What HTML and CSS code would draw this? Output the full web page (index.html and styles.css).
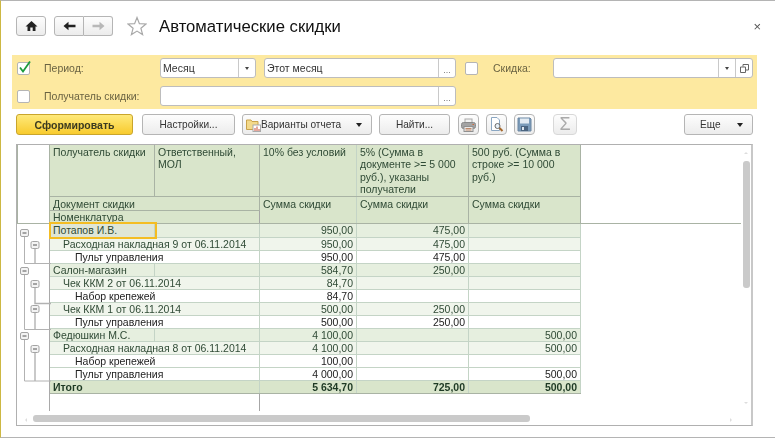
FILE: index.html
```html
<!DOCTYPE html>
<html>
    <head>
        <title>Автоматические скидки</title>
        <link rel="stylesheet" href="styles.css">
    </head>
    <body>
    <div class="window">

    <div class="head">
        <button class="btn nav-home">
            <svg width="13" height="12" viewBox="0 0 13 12"><path d="M6.5 1 L12.5 6.5 H10.5 V11 H7.7 V7.5 H5.3 V11 H2.5 V6.5 H0.5 Z" fill="#222"/></svg>
        </button>
        <div class="nav-group">
            <button class="btn nav-arrow">
                <svg width="13" height="10" viewBox="0 0 13 10"><path d="M0.5 5 L5.5 0.8 V3.7 H12.5 V6.3 H5.5 V9.2 Z" fill="#222"/></svg>
            </button>
            <button class="btn nav-arrow">
                <svg width="13" height="10" viewBox="0 0 13 10"><path d="M12.5 5 L7.5 0.8 V3.7 H0.5 V6.3 H7.5 V9.2 Z" fill="#b8b8b8"/></svg>
            </button>
        </div>
        <svg class="star" width="20" height="20" viewBox="0 0 20 20"><path d="M10 1.5 L12.4 7.6 L19 8 L13.9 12.2 L15.6 18.6 L10 15.1 L4.4 18.6 L6.1 12.2 L1 8 L7.6 7.6 Z" fill="#fff" stroke="#a9a9a9" stroke-width="1.2"/></svg>
        <h1 class="title">Автоматические скидки</h1>
        <div class="close">×</div>
    </div>

    <div class="filters">
        <div class="filter-row">
            <span class="check on"><svg width="15" height="15" viewBox="0 0 15 15"><path d="M3 7.5 L6 11.5 L13 1.5" fill="none" stroke="#1c9b3c" stroke-width="1.8"/></svg></span>
            <label class="lbl lbl-first">Период:</label>
            <div class="field w-period">
                <span class="val">Месяц</span>
                <span class="fbtn"><i class="caret"></i></span>
            </div>
            <div class="field w-month">
                <span class="val">Этот месяц</span>
                <span class="fbtn dots">...</span>
            </div>
            <span class="check check-discount"></span>
            <label class="lbl lbl-discount">Скидка:</label>
            <div class="field w-discount">
                <span class="val"></span>
                <span class="fbtn"><i class="caret"></i></span>
                <span class="fbtn">
                    <svg width="9" height="9" viewBox="0 0 9 9"><path d="M3 2.5 V0.5 H8.5 V6 H6 M0.5 3 H5.5 V8.5 H0.5 Z" fill="none" stroke="#666"/></svg>
                </span>
            </div>
        </div>
        <div class="filter-row">
            <span class="check"></span>
            <label class="lbl lbl-first">Получатель скидки:</label>
            <div class="field w-person">
                <span class="val"></span>
                <span class="fbtn dots">...</span>
            </div>
        </div>
    </div>

    <div class="commands">
        <button class="btn cmd cmd-main">Сформировать</button>
        <button class="btn cmd cmd-settings">Настройки...</button>
        <button class="btn cmd cmd-variants">
            <svg width="15" height="14" viewBox="0 0 15 14"><path d="M0.5 2 H5 L6 3.5 H12 V11.5 H0.5 Z" fill="#f3d98a" stroke="#c9a24a"/><rect x="7" y="7" width="7.5" height="6.5" fill="#fff" stroke="#aaa"/><path d="M9 13 V10 M11 13 V8.5 M13 13 V11" stroke="#c8503c"/></svg>
            <span class="cmd-text">Варианты отчета</span>
            <i class="caret big"></i>
        </button>
        <button class="btn cmd cmd-find">Найти...</button>
        <button class="btn icon-btn">
            <svg width="15" height="14" viewBox="0 0 15 14"><rect x="4" y="1" width="7" height="4" fill="#f2f2f2" stroke="#aaa"/><rect x="0.5" y="4.5" width="14" height="6" rx="2" fill="#a3a3a3" stroke="#8a8a8a"/><rect x="3" y="8.5" width="9" height="5" fill="#e9e9e9" stroke="#8f8f8f"/><path d="M11.5 6.5 H13" stroke="#d0693a"/><path d="M4.5 10.5 H10.5 M4.5 12 H10.5" stroke="#c08a6a"/></svg>
        </button>
        <button class="btn icon-btn">
            <svg width="15" height="15" viewBox="0 0 15 15"><path d="M2.5 0.5 H8 L10.5 3 V13.5 H2.5 Z" fill="#fff" stroke="#8aa6c2"/><circle cx="8.5" cy="9" r="2.5" fill="#e6f0f8" stroke="#6a6a6a"/><path d="M10.5 11 L13.5 14" stroke="#a5672b" stroke-width="2"/></svg>
        </button>
        <button class="btn icon-btn">
            <svg width="15" height="15" viewBox="0 0 15 15"><path d="M1 1 H13 L14 2 V14 H1 Z" fill="#7c9cba" stroke="#6a86a2"/><rect x="3" y="1.5" width="9" height="5" fill="#e3ebf2"/><rect x="4" y="9" width="7" height="5" fill="#4c6580"/><rect x="5" y="10" width="2" height="3" fill="#dfe7ef"/></svg>
        </button>
        <button class="btn icon-btn sigma">Σ</button>
        <button class="btn cmd cmd-more"><span>Еще</span><i class="caret big"></i></button>
    </div>

    <div class="frame">
        <table class="report">
            <colgroup>
                <col class="c-tree">
                <col class="c-name">
                <col class="c-mol">
                <col class="c-a">
                <col class="c-b">
                <col class="c-c">
                <col>
            </colgroup>
            <tr class="h1">
                <th class="blank" rowspan="3"></th>
                <th>Получатель скидки</th>
                <th>Ответственный, МОЛ</th>
                <th class="strong">10% без условий</th>
                <th>5% (Сумма в документе &gt;= 5 000 руб.), указаны получатели</th>
                <th>500 руб. (Сумма в строке &gt;= 10 000 руб.)</th>
                <th class="rest" rowspan="3"></th>
            </tr>
            <tr class="h2">
                <th colspan="2">Документ скидки</th>
                <th class="strong" rowspan="2">Сумма скидки</th>
                <th rowspan="2">Сумма скидки</th>
                <th rowspan="2">Сумма скидки</th>
            </tr>
            <tr class="h3">
                <th colspan="2">Номенклатура</th>
            </tr>
            <tr class="l1 first">
                <td class="tree" rowspan="14">
                    <svg width="33" height="160" viewBox="0 0 33 160">
                        <path class="tree-line" d="M6.5 13 V39.5 H33"/>
                        <path class="tree-line" d="M6.5 51 V105.5 H33"/>
                        <path class="tree-line" d="M6.5 116 V157 H33"/>
                        <path class="tree-line second" d="M17 25 V39"/>
                        <path class="tree-line second" d="M17 64 V79.5 H33"/>
                        <path class="tree-line second" d="M17 89 V105"/>
                        <path class="tree-line second" d="M17 129 V157"/>
                        <g class="tree-box">
                            <rect x="2.5" y="5.5" width="8" height="7" rx="1.5"/><path d="M4.5 9 H8.5"/>
                            <rect x="13" y="17.5" width="8" height="7" rx="1.5"/><path d="M15 21 H19"/>
                            <rect x="2.5" y="43.5" width="8" height="7" rx="1.5"/><path d="M4.5 47 H8.5"/>
                            <rect x="13" y="56.5" width="8" height="7" rx="1.5"/><path d="M15 60 H19"/>
                            <rect x="13" y="81.5" width="8" height="7" rx="1.5"/><path d="M15 85 H19"/>
                            <rect x="2.5" y="108.5" width="8" height="7" rx="1.5"/><path d="M4.5 112 H8.5"/>
                            <rect x="13" y="121.5" width="8" height="7" rx="1.5"/><path d="M15 125 H19"/>
                        </g>
                    </svg>
                </td>
                <td class="current">Потапов И.В.</td><td></td>
                <td class="num strong">950,00</td><td class="num">475,00</td><td></td><td class="rest"></td>
            </tr>
            <tr class="l2">
                <td class="in2" colspan="2">Расходная накладная 9 от 06.11.2014</td>
                <td class="num strong">950,00</td><td class="num">475,00</td><td></td><td class="rest"></td>
            </tr>
            <tr class="l3">
                <td class="in3" colspan="2">Пульт управления</td>
                <td class="num strong">950,00</td><td class="num">475,00</td><td></td><td class="rest"></td>
            </tr>
            <tr class="l1">
                <td>Салон-магазин</td><td></td>
                <td class="num strong">584,70</td><td class="num">250,00</td><td></td><td class="rest"></td>
            </tr>
            <tr class="l2">
                <td class="in2" colspan="2">Чек ККМ 2 от 06.11.2014</td>
                <td class="num strong">84,70</td><td></td><td></td><td class="rest"></td>
            </tr>
            <tr class="l3">
                <td class="in3" colspan="2">Набор крепежей</td>
                <td class="num strong">84,70</td><td></td><td></td><td class="rest"></td>
            </tr>
            <tr class="l2">
                <td class="in2" colspan="2">Чек ККМ 1 от 06.11.2014</td>
                <td class="num strong">500,00</td><td class="num">250,00</td><td></td><td class="rest"></td>
            </tr>
            <tr class="l3">
                <td class="in3" colspan="2">Пульт управления</td>
                <td class="num strong">500,00</td><td class="num">250,00</td><td></td><td class="rest"></td>
            </tr>
            <tr class="l1">
                <td>Федюшкин М.С.</td><td></td>
                <td class="num strong">4 100,00</td><td></td><td class="num">500,00</td><td class="rest"></td>
            </tr>
            <tr class="l2">
                <td class="in2" colspan="2">Расходная накладная 8 от 06.11.2014</td>
                <td class="num strong">4 100,00</td><td></td><td class="num">500,00</td><td class="rest"></td>
            </tr>
            <tr class="l3">
                <td class="in3" colspan="2">Набор крепежей</td>
                <td class="num strong">100,00</td><td></td><td></td><td class="rest"></td>
            </tr>
            <tr class="l3">
                <td class="in3" colspan="2">Пульт управления</td>
                <td class="num strong">4 000,00</td><td></td><td class="num">500,00</td><td class="rest"></td>
            </tr>
            <tr class="total">
                <td colspan="2">Итого</td>
                <td class="num strong">5 634,70</td><td class="num">725,00</td><td class="num">500,00</td><td class="rest"></td>
            </tr>
            <tr class="tail">
                <td class="tail-name" colspan="2"></td>
                <td class="strong"></td><td class="none"></td><td class="none"></td><td class="rest"></td>
            </tr>
        </table>
        <div class="scroll-h"></div>
        <div class="scroll-v"></div>
        <i class="tick tick-left"></i>
        <i class="tick tick-right"></i>
        <i class="tick tick-up"></i>
        <i class="tick tick-down"></i>
    </div>

    </div>
    </body>
</html>
```

FILE: styles.css
```css
*{
    box-sizing: border-box;
}
body{
    margin: 0;
    background: #fff;
    font-family: "Liberation Sans", Arial, sans-serif;
    font-size: 10.5px;
    color: #2f4a35;
}
.window{
    width: 775px;
    height: 438px;
    border-top: 1px solid #b4b4b4;
    border-bottom: 1px solid #b4b4b4;
    border-left: 1px solid #cdb843;
    overflow: hidden;
    filter: blur(0.3px);
}

/* buttons */
.btn{
    font-family: inherit;
    font-size: 10.1px;
    color: #333;
    height: 21px;
    padding: 0;
    border: 1px solid #b5b5b5;
    border-radius: 3px;
    background: linear-gradient(#fdfdfd, #ececec);
    display: flex;
    align-items: center;
    justify-content: center;
}

/* head */
.head{
    display: flex;
    align-items: center;
    height: 20px;
    margin-top: 15px;
    padding-left: 15px;
}
.nav-home{
    width: 30px;
    height: 20px;
}
.nav-group{
    display: flex;
    margin-left: 8px;
}
.nav-arrow{
    width: 30px;
    height: 20px;
    border-radius: 3px 0 0 3px;
}
.nav-arrow + .nav-arrow{
    width: 29px;
    border-left: 0;
    border-radius: 0 3px 3px 0;
}
.star{
    margin-left: 14px;
}
.title{
    margin: 2px 0 0 12px;
    font-size: 16.7px;
    font-weight: normal;
    color: #111;
}
.close{
    margin-left: auto;
    margin-right: 14px;
    font-size: 13px;
    color: #555;
}

/* filters */
.filters{
    width: 745px;
    height: 54px;
    margin: 19px 0 0 11px;
    padding-top: 3px;
    background: #fde9a0;
}
.filter-row{
    display: flex;
    align-items: center;
    height: 20px;
    margin-bottom: 8px;
    padding-left: 5px;
}
.check{
    flex: none;
    width: 13px;
    height: 13px;
    border: 1px solid #b5b5b5;
    border-radius: 2px;
    background: #fff;
    position: relative;
}
.check svg{
    position: absolute;
    left: -1px;
    top: -3px;
}
.lbl{
    color: #6a6342;
}
.lbl-first{
    width: 116px;
    margin-left: 14px;
}
.lbl-discount{
    width: 60px;
    margin-left: 15px;
}
.check-discount{
    margin-left: 9px;
}
.field{
    display: flex;
    height: 20px;
    border: 1px solid #bdbdbd;
    border-radius: 3px;
    background: #fff;
    color: #333;
}
.val{
    flex: 1;
    padding: 3px 2px 0;
}
.fbtn{
    width: 17px;
    border-left: 1px solid #c9c9c9;
    display: flex;
    align-items: center;
    justify-content: center;
}
.dots{
    align-items: flex-end;
    padding-bottom: 2px;
    color: #777;
    font-size: 9px;
}
.w-period{
    width: 96px;
}
.w-month{
    width: 192px;
    margin-left: 8px;
}
.w-discount{
    width: 200px;
}
.w-person{
    width: 296px;
}
.caret{
    display: block;
    width: 0;
    height: 0;
    border: 2px solid transparent;
    border-top: 3px solid #444;
    border-bottom: 0;
}
.caret.big{
    border-width: 3px;
    border-top-width: 4px;
    border-bottom-width: 0;
    border-top-color: #222;
}

/* command bar */
.commands{
    display: flex;
    margin: 5px 0 0 15px;
    width: 737px;
}
.cmd-main{
    width: 117px;
    border-color: #c9a52c;
    background: linear-gradient(#fee97a, #f8cb2e);
    font-weight: bold;
    font-size: 10.5px;
    color: #3a3a20;
}
.cmd-settings{
    width: 93px;
    margin-left: 9px;
}
.cmd-variants{
    width: 130px;
    margin-left: 7px;
    justify-content: flex-start;
    padding-left: 3px;
}
.cmd-text{
    margin-left: 0;
    flex: 1;
    text-align: left;
}
.cmd-variants .caret{
    margin-right: 9px;
}
.cmd-find{
    width: 71px;
    margin-left: 7px;
}
.icon-btn{
    width: 21px;
    margin-left: 7px;
    border-radius: 4px;
}
.cmd-find + .icon-btn{
    margin-left: 8px;
}
.sigma{
    width: 24px;
    margin-left: 18px;
    border-color: #d8d8d8;
    font-size: 18px;
    color: #aaa;
}
.cmd-more{
    width: 69px;
    margin-left: auto;
    justify-content: space-between;
    padding: 0 9px 0 15px;
}

/* report */
.frame{
    position: relative;
    width: 737px;
    height: 282px;
    margin: 9px 0 0 15px;
    border: 1px solid #b0b0b0;
    border-right: 2px solid #c8c8c8;
    overflow: hidden;
}
.report{
    width: 724px;
    table-layout: fixed;
    border-collapse: collapse;
}
.c-tree{ width: 32px; }
.c-name{ width: 105px; }
.c-mol{ width: 105px; }
.c-a{ width: 97px; }
.c-b{ width: 112px; }
.c-c{ width: 112px; }
.report th,
.report td{
    height: 13px;
    padding: 0 3px;
    font-weight: normal;
    line-height: 12px;
    text-align: left;
    vertical-align: top;
    white-space: nowrap;
    overflow: hidden;
    border: 1px solid #c4d4c6;
}
.report th{
    background: #d9e5cb;
    border-color: #a9b3a4;
    white-space: normal;
}
.h1 th{
    height: 51px;
    line-height: 12.45px;
    padding-top: 1px;
    border-top: 0;
}
.h2 th{
    height: 14px;
    padding-top: 1px;
    line-height: 12px;
}
.h3 th{
    line-height: 12px;
}
.report .blank,
.report .rest{
    background: #fff;
    padding: 0;
    border-top: 0;
    border-left-color: #a9b3a4;
    border-right: 0;
    border-bottom: 1px solid #a9b3a4;
}
.report td.rest{
    background: #fff;
    border: 0;
    border-left: 1px solid #c4d4c6;
}
.report td.tree{
    padding: 0;
    background: #fff;
    border: 0;
    border-right: 1px solid #a9a9a9;
    overflow: visible;
}
.tree svg{
    display: block;
}
.tree-line{
    fill: none;
    stroke: #b2b2b2;
}
.tree-line.second{
    stroke-width: 1.4;
}
.tree-box rect{
    fill: #f3f3f3;
    stroke: #a4a4a4;
}
.tree-box path{
    fill: none;
    stroke: #555;
}
.report .first td{
    height: 14px;
}
.l1 td{
    background: #e6efdf;
}
.l2 td{
    background: #f0f5ec;
}
.l3 td{
    background: #fff;
    color: #222;
}
.num{
    text-align: right !important;
    padding-right: 3px !important;
}
.in2{
    padding-left: 13px !important;
}
.in3{
    padding-left: 25px !important;
}
.report .strong{
    border-left-color: #a6a6a6;
    border-right-color: #c4d4c6;
}
.report .total td{
    background: #d9e5cb;
    font-weight: bold;
    color: #1e3a24;
    border-top-color: #a9b3a4;
    border-bottom-color: #a9b3a4;
}
.report .total td.rest{
    background: #fff;
    border: 0;
}
.report .tail td{
    height: 18px;
    background: #fff;
    border: 0;
}
.report .tail td.tail-name{
    border-left: 1px solid #a9a9a9;
}
.report .tail td.strong{
    border-left: 1px solid #a6a6a6;
}

/* the cell frame and the scrollbars lie over the table */
.report .current{
    position: relative;
    background: #dfe6d6;
    overflow: visible;
}
.current::after{
    content: "";
    position: absolute;
    left: -1px;
    right: -3px;
    top: -2px;
    bottom: -2px;
    border: 2px solid #f4bd23;
    z-index: 1;
}
.scroll-h{
    position: absolute;
    left: 16px;
    top: 270px;
    width: 497px;
    height: 7px;
    border-radius: 3px;
    background: #cacaca;
}
.scroll-v{
    position: absolute;
    left: 726px;
    top: 16px;
    width: 7px;
    height: 127px;
    border-radius: 3px;
    background: #cacaca;
}
.tick{
    position: absolute;
    width: 0;
    height: 0;
    border: 2px solid transparent;
}
.tick-left{
    left: 8px;
    top: 273px;
    border-right-color: #ddd;
    border-left: 0;
}
.tick-right{
    left: 713px;
    top: 273px;
    border-left-color: #ddd;
    border-right: 0;
}
.tick-up{
    left: 727px;
    top: 7px;
    border-bottom-color: #ddd;
    border-top: 0;
}
.tick-down{
    left: 727px;
    top: 257px;
    border-top-color: #ddd;
    border-bottom: 0;
}
```
